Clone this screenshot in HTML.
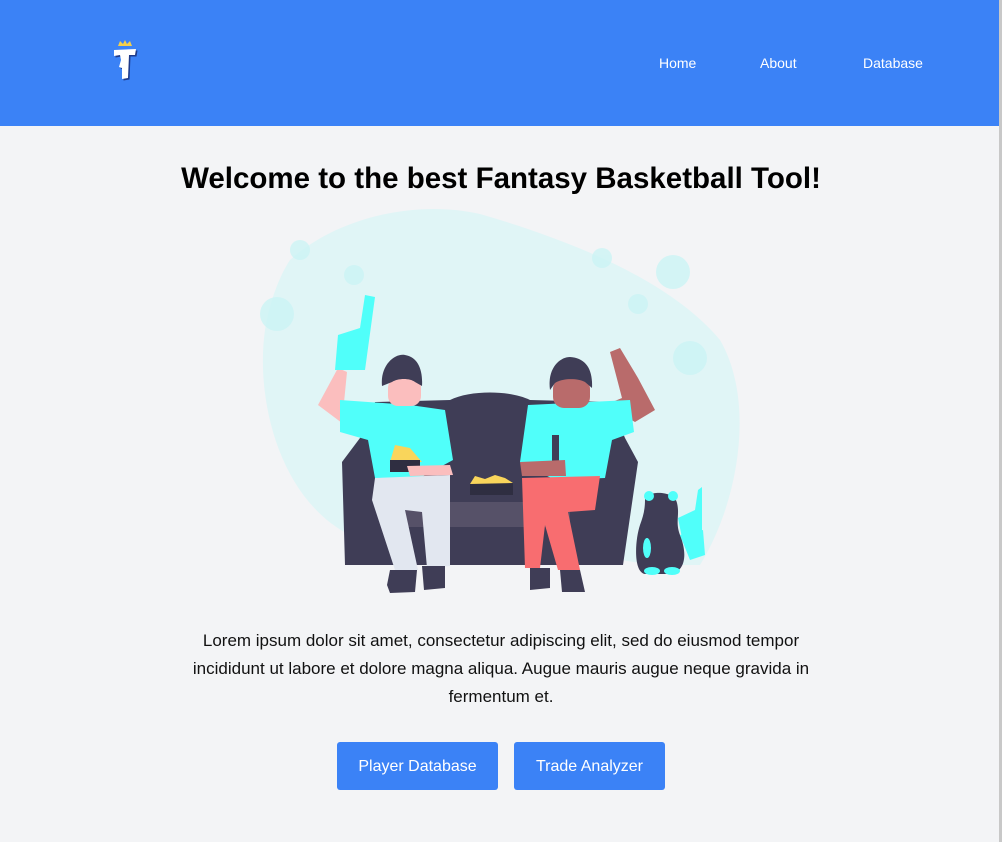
<!DOCTYPE html>
<html><head><meta charset="utf-8"><style>
*{margin:0;padding:0;box-sizing:border-box}
body{width:1002px;height:842px;background:#f3f4f6;font-family:"Liberation Sans",sans-serif;position:relative;overflow:hidden}
.hdr{position:absolute;left:0;top:0;width:1002px;height:126px;background:#3b82f6}
.nav a{position:absolute;top:55px;color:#fff;font-size:14px;text-decoration:none}
.sb{position:absolute;right:0;top:0;width:3px;height:842px;background:#c8c8c8}
h1{position:absolute;top:162px;left:0;width:1002px;text-align:center;font-size:29.5px;font-weight:bold;color:#000}
p{position:absolute;top:627px;left:0;width:1002px;text-align:center;font-size:17px;line-height:28px;color:#111;white-space:nowrap}
.btn{position:absolute;top:742px;height:48px;background:#3b82f6;color:#fff;font-size:16px;line-height:50px;text-align:center;border-radius:3px}
</style></head><body>
<div class="hdr">
<svg style="position:absolute;left:105px;top:38px" width="40" height="46" viewBox="0 0 40 46">
<path d="M13 8 L15 3 L18 6 L20 2 L22 6 L25 3 L27 8 Z" fill="#f5cf4a"/>
<path d="M9 12 L31 11 L30 17 L24 17 L23 40 L17 41 L17 30 L14 29 L16 22 L15 17 L9 18 Z" fill="#1e3a8a" transform="translate(1.5,1.5)"/>
<path d="M9 12 L31 11 L30 17 L24 17 L23 40 L17 41 L17 30 L14 29 L16 22 L15 17 L9 18 Z" fill="#fff"/>
</svg>
<div class="nav"><a style="left:659px">Home</a><a style="left:760px">About</a><a style="left:863px">Database</a></div>
</div>
<div class="sb"></div>
<h1>Welcome to the best Fantasy Basketball Tool!</h1>
<svg style="position:absolute;left:250px;top:200px" width="500" height="400" viewBox="0 0 500 400">
<path d="M40 60 C90 15 170 0 230 14 C320 40 420 80 470 140 C505 200 490 300 450 365 L400 365 C300 345 200 350 100 335 C30 300 5 200 15 130 C20 100 30 75 40 60 Z" fill="#e0f5f6"/>
<g fill="#ccf4f5" opacity=".8">
<circle cx="50" cy="50" r="10"/><circle cx="104" cy="75" r="10"/><circle cx="27" cy="114" r="17"/>
<circle cx="352" cy="58" r="10"/><circle cx="423" cy="72" r="17"/><circle cx="388" cy="104" r="10"/><circle cx="440" cy="158" r="17"/>
</g>
<path d="M95 365 L92 262 L110 238 L125 202 L200 200 C220 190 260 190 280 200 L360 202 L375 238 L388 262 L373 365 Z" fill="#3f3d56"/>
<rect x="150" y="302" width="170" height="25" fill="#565168"/>
<rect x="220" y="283" width="43" height="12" fill="#2f2e41"/>
<path d="M220 284 L225 276 L235 279 L245 275 L255 278 L263 283 Z" fill="#f9d55b"/>
<path d="M68 205 L88 168 L97 172 L92 223 Z" fill="#fbbebe"/>
<path d="M85 170 L88 135 L110 128 L115 95 L125 97 L115 170 Z" fill="#50fffa"/>
<path d="M90 200 L160 205 L195 210 L203 260 L170 278 L125 278 L118 240 L90 232 Z" fill="#50fffa"/>
<path d="M125 278 L200 275 L200 366 L177 368 L172 312 L155 310 L168 370 L145 370 L122 300 Z" fill="#e2e7f0"/>
<path d="M140 370 L167 370 L165 392 L140 393 L137 385 Z M172 366 L195 366 L195 388 L174 390 Z" fill="#3f3d56"/>
<rect x="138" y="178" width="33" height="28" rx="10" fill="#fbbebe"/>
<path d="M132 186 C130 165 145 153 155 155 C168 157 173 170 172 186 L165 182 C160 178 148 178 142 182 Z" fill="#3f3d56"/>
<path d="M140 262 L145 245 L160 248 L172 262 Z" fill="#f9d55b"/>
<rect x="140" y="260" width="30" height="12" fill="#2f2e41"/>
<path d="M157 266 L200 265 L203 275 L160 276 Z" fill="#fbbebe"/>
<path d="M355 205 L372 198 L360 152 L370 148 L388 178 L405 210 L385 222 Z" fill="#b96b6b"/>
<path d="M278 205 L380 200 L384 232 L362 240 L355 278 L305 280 L270 262 Z" fill="#50fffa"/>
<path d="M272 278 L350 276 L345 310 L318 312 L330 370 L308 370 L295 325 L290 368 L275 368 Z" fill="#f86d70"/>
<path d="M280 368 L300 368 L300 388 L280 390 Z M310 370 L330 370 L335 392 L312 392 Z" fill="#3f3d56"/>
<rect x="303" y="178" width="37" height="30" rx="11" fill="#b96b6b"/>
<path d="M300 190 C297 168 310 157 320 157 C335 158 343 168 342 188 L335 182 C328 178 312 178 305 183 Z" fill="#3f3d56"/>
<rect x="302" y="235" width="7" height="40" fill="#3f3d56"/>
<path d="M270 262 L315 260 L316 276 L272 276 Z" fill="#b96b6b"/>
<path d="M395 300 C395 290 425 290 427 303 C430 315 425 322 430 335 C438 355 435 372 420 374 L395 374 C383 372 385 340 390 325 C393 317 395 310 395 300 Z" fill="#3f3d56"/>
<circle cx="399" cy="296" r="5" fill="#50fffa"/><circle cx="423" cy="296" r="5" fill="#50fffa"/>
<ellipse cx="397" cy="348" rx="4" ry="10" fill="#50fffa"/>
<ellipse cx="402" cy="371" rx="8" ry="4" fill="#50fffa"/><ellipse cx="422" cy="371" rx="8" ry="4" fill="#50fffa"/>
<path d="M430 335 L453 330 L455 355 L440 360 Z M428 318 L445 310 L448 290 L452 287 L452 335 L432 338 Z" fill="#50fffa"/>
</svg>
<p>Lorem ipsum dolor sit amet, consectetur adipiscing elit, sed do eiusmod tempor<br>incididunt ut labore et dolore magna aliqua. Augue mauris augue neque gravida in<br>fermentum et.</p>
<div class="btn" style="left:337px;width:161px">Player Database</div>
<div class="btn" style="left:514px;width:151px">Trade Analyzer</div>
</body></html>
